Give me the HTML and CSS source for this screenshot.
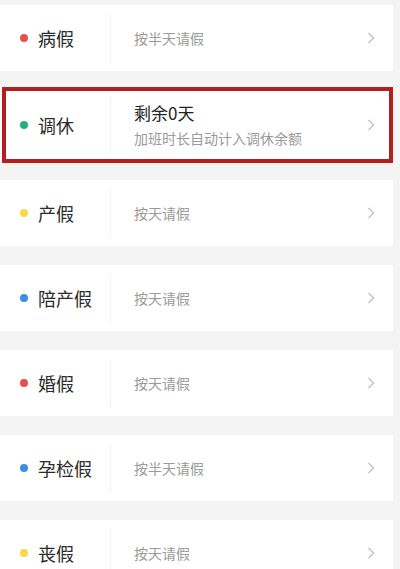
FILE: index.html
```html
<!DOCTYPE html>
<html lang="zh-CN">
<head>
<meta charset="utf-8">
<link rel="stylesheet" href="styles.css">
</head>
<body>
<div class="list">
  <div class="card">
    <div class="name"><span class="dot red"></span><span class="label">病假</span></div>
    <div class="divider"></div>
    <div class="desc"><span class="hint">按半天请假</span></div>
    <svg class="chev" viewBox="0 0 8 12" width="8" height="12"><path d="M1.5 1 L6.5 6 L1.5 11" fill="none" stroke="#c2c2c2" stroke-width="1.4"/></svg>
  </div>
  <div class="card tall highlight">
    <div class="name"><span class="dot green"></span><span class="label">调休</span></div>
    <div class="divider"></div>
    <div class="desc stack"><span class="title">剩余0天</span><span class="hint">加班时长自动计入调休余额</span></div>
    <svg class="chev" viewBox="0 0 8 12" width="8" height="12"><path d="M1.5 1 L6.5 6 L1.5 11" fill="none" stroke="#c2c2c2" stroke-width="1.4"/></svg>
  </div>
  <div class="card">
    <div class="name"><span class="dot yellow"></span><span class="label">产假</span></div>
    <div class="divider"></div>
    <div class="desc"><span class="hint">按天请假</span></div>
    <svg class="chev" viewBox="0 0 8 12" width="8" height="12"><path d="M1.5 1 L6.5 6 L1.5 11" fill="none" stroke="#c2c2c2" stroke-width="1.4"/></svg>
  </div>
  <div class="card">
    <div class="name"><span class="dot blue"></span><span class="label">陪产假</span></div>
    <div class="divider"></div>
    <div class="desc"><span class="hint">按天请假</span></div>
    <svg class="chev" viewBox="0 0 8 12" width="8" height="12"><path d="M1.5 1 L6.5 6 L1.5 11" fill="none" stroke="#c2c2c2" stroke-width="1.4"/></svg>
  </div>
  <div class="card">
    <div class="name"><span class="dot red"></span><span class="label">婚假</span></div>
    <div class="divider"></div>
    <div class="desc"><span class="hint">按天请假</span></div>
    <svg class="chev" viewBox="0 0 8 12" width="8" height="12"><path d="M1.5 1 L6.5 6 L1.5 11" fill="none" stroke="#c2c2c2" stroke-width="1.4"/></svg>
  </div>
  <div class="card">
    <div class="name"><span class="dot blue"></span><span class="label">孕检假</span></div>
    <div class="divider"></div>
    <div class="desc"><span class="hint">按半天请假</span></div>
    <svg class="chev" viewBox="0 0 8 12" width="8" height="12"><path d="M1.5 1 L6.5 6 L1.5 11" fill="none" stroke="#c2c2c2" stroke-width="1.4"/></svg>
  </div>
  <div class="card">
    <div class="name"><span class="dot yellow"></span><span class="label">丧假</span></div>
    <div class="divider"></div>
    <div class="desc"><span class="hint">按天请假</span></div>
    <svg class="chev" viewBox="0 0 8 12" width="8" height="12"><path d="M1.5 1 L6.5 6 L1.5 11" fill="none" stroke="#c2c2c2" stroke-width="1.4"/></svg>
  </div>
</div>
</body>
</html>
```

FILE: styles.css
```css
html, body {
  margin: 0;
  padding: 0;
  background: #f4f4f5;
  font-family: "Noto Sans CJK SC", "Noto Sans", sans-serif;
  overflow: hidden;
}

.list {
  width: 393px;
  padding-top: 5px;
  display: flex;
  flex-direction: column;
  gap: 19px;
}

.card {
  height: 66px;
  flex: none;
  background: #fff;
  display: flex;
  align-items: center;
}

.card.tall {
  height: 76px;
  margin: -3px 0 -2px;
}

.highlight {
  position: relative;
}

.highlight::after {
  content: "";
  position: absolute;
  top: 0;
  bottom: 0;
  left: 2px;
  right: 0;
  border: 4px solid #b11f1e;
  pointer-events: none;
}

.name {
  width: 110px;
  box-sizing: border-box;
  padding-left: 20px;
  display: flex;
  align-items: center;
  gap: 10px;
}

.dot {
  width: 8px;
  height: 8px;
  border-radius: 50%;
  flex: none;
}

.dot.red { background: #e2524a; }
.dot.green { background: #27ad7b; }
.dot.yellow { background: #f6d84a; }
.dot.blue { background: #3b8de8; }

.label {
  font-size: 18px;
  color: #2b2b2b;
  line-height: 24px;
}

.divider {
  align-self: stretch;
  margin: 10px 0 9px;
  border-left: 1px solid #f0f0f0;
}

.desc {
  flex: 1;
  padding-left: 23px;
  display: flex;
}

.desc.stack {
  flex-direction: column;
  gap: 4px;
}

.title {
  font-size: 17px;
  line-height: 22px;
  color: #222;
}

.hint {
  font-size: 14px;
  line-height: 20px;
  color: #9a9a9a;
}

.chev {
  margin-right: 18px;
  flex: none;
}
```
